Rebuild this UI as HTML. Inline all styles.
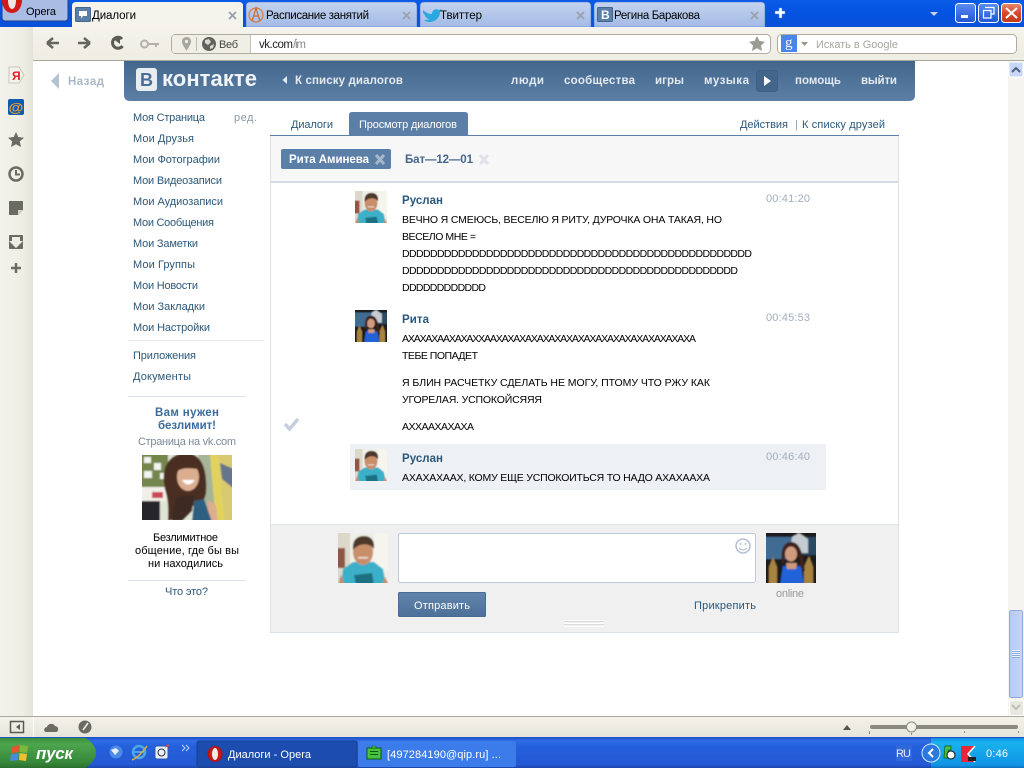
<!DOCTYPE html>
<html lang="ru"><head><meta charset="utf-8"><title>Диалоги</title>
<style>
html,body{margin:0;padding:0;width:1024px;height:768px;overflow:hidden;background:#fff}
svg{display:block}
text{font-family:"Liberation Sans","DejaVu Sans",sans-serif;font-size:11px;white-space:pre}
.m{fill:#2b587a}
.b{font-weight:bold;font-size:11.5px}
.k{fill:#000;font-size:10.5px}
.n{fill:#fff;font-weight:bold;font-size:11.5px}
.t{fill:#000;font-size:11.5px}
.g{fill:#a0aebd}
</style></head><body>
<svg width="1024" height="768" viewBox="0 0 1024 768" xmlns="http://www.w3.org/2000/svg">
<defs>
<filter id="soft" x="-5%" y="-5%" width="110%" height="110%"><feGaussianBlur stdDeviation=".7"/></filter>
<linearGradient id="title" x1="0" y1="0" x2="0" y2="1"><stop offset="0" stop-color="#0a5be8"/><stop offset=".5" stop-color="#0453e0"/><stop offset="1" stop-color="#0a50d8"/></linearGradient>
<linearGradient id="tab" x1="0" y1="0" x2="0" y2="1"><stop offset="0" stop-color="#c4d4ef"/><stop offset="1" stop-color="#a3bae6"/></linearGradient>
<linearGradient id="tool" x1="0" y1="0" x2="0" y2="1"><stop offset="0" stop-color="#f4f3ec"/><stop offset="1" stop-color="#eeede3"/></linearGradient>
<linearGradient id="side" x1="0" y1="0" x2="1" y2="0"><stop offset="0" stop-color="#f3f2ea"/><stop offset=".7" stop-color="#efeee4"/><stop offset="1" stop-color="#e4e3d8"/></linearGradient>
<linearGradient id="stat" x1="0" y1="0" x2="0" y2="1"><stop offset="0" stop-color="#f3f2ea"/><stop offset="1" stop-color="#e6e5da"/></linearGradient>
<linearGradient id="vk" x1="0" y1="0" x2="0" y2="1"><stop offset="0" stop-color="#43668b"/><stop offset="1" stop-color="#5c7fa6"/></linearGradient>
<linearGradient id="btn" x1="0" y1="0" x2="0" y2="1"><stop offset="0" stop-color="#6285ac"/><stop offset="1" stop-color="#4d7098"/></linearGradient>
<linearGradient id="task" x1="0" y1="0" x2="0" y2="1"><stop offset="0" stop-color="#1c4fc4"/><stop offset=".12" stop-color="#2f6de6"/><stop offset=".3" stop-color="#2560dc"/><stop offset=".9" stop-color="#2459d4"/><stop offset="1" stop-color="#1a44a8"/></linearGradient>
<linearGradient id="start" x1="0" y1="0" x2="0" y2="1"><stop offset="0" stop-color="#3c8f3c"/><stop offset=".2" stop-color="#4da54d"/><stop offset=".8" stop-color="#37893a"/><stop offset="1" stop-color="#2a6f2c"/></linearGradient>
<linearGradient id="tray" x1="0" y1="0" x2="0" y2="1"><stop offset="0" stop-color="#0f8ee0"/><stop offset=".15" stop-color="#19b2ee"/><stop offset=".9" stop-color="#1094e4"/><stop offset="1" stop-color="#0b6fc0"/></linearGradient>
<linearGradient id="thumb" x1="0" y1="0" x2="1" y2="0"><stop offset="0" stop-color="#b6c9f5"/><stop offset="1" stop-color="#c6d5f7"/></linearGradient>
<linearGradient id="close" x1="0" y1="0" x2="0" y2="1"><stop offset="0" stop-color="#e88a6c"/><stop offset=".5" stop-color="#d9482a"/><stop offset="1" stop-color="#c2371c"/></linearGradient>
<linearGradient id="wb" x1="0" y1="0" x2="0" y2="1"><stop offset="0" stop-color="#5c8df0"/><stop offset="1" stop-color="#1f55d8"/></linearGradient>
<radialGradient id="ore"><stop offset="0" stop-color="#f03030"/><stop offset="1" stop-color="#b01010"/></radialGradient>

<symbol id="rus" viewBox="0 0 50 50">
<g filter="url(#soft)">
<rect x="-2" y="-2" width="54" height="54" fill="#eef0e8"/>
<rect x="-2" y="-2" width="14" height="54" fill="#dcd8ca"/>
<rect x="-2" y="15" width="9" height="20" fill="#8f5545"/>
<rect x="36" y="-2" width="16" height="40" fill="#f5f5ee"/>
<path d="M3 52 L5 36 L15 29 L36 29 L45 36 L48 52Z" fill="#3bb0c8"/>
<path d="M0 52 L3 42 L7 52Z M44 52 L47 44 L51 52Z" fill="#c98a68"/>
<path d="M16 42 L34 40 L36 52 L18 52Z" fill="#1f6f82"/>
<ellipse cx="25" cy="19" rx="10" ry="13" fill="#c98d6b"/>
<path d="M15 17 C14 6 20 3 26 3 C34 3 37 9 36 16 C32 10 22 9 15 17Z" fill="#4e382c"/>
<rect x="20" y="24" width="10" height="1.500" fill="#f0e2d6"/>
</g>
</symbol>

<symbol id="rit" viewBox="0 0 50 50">
<g filter="url(#soft)">
<rect x="-2" y="-2" width="54" height="54" fill="#1b1c1a"/>
<rect x="-2" y="4" width="30" height="22" fill="#3f6c94"/>
<rect x="36" y="4" width="16" height="18" fill="#2c4a64"/>
<path d="M24 20 L26 4 L33 0 L42 6 L42 20Z" fill="#c4ccd2"/>
<path d="M3 52 V34 L7 24 L11 34 V52Z M38 52 V34 L43 23 L47 34 V52Z" fill="#a98440"/>
<path d="M14 52 L17 33 H35 L38 52Z" fill="#2062d8"/>
<path d="M16 30 C14 12 20 9 26 9 C34 10 37 20 39 38 C35 38 33 32 33 24 L19 24 C18 30 18 32 16 30Z" fill="#3c241a"/>
<ellipse cx="25" cy="21" rx="6" ry="7.500" fill="#d09c80"/>
<path d="M20 30 H31 L30 36 H21Z" fill="#cf9a7c"/>
</g>
</symbol>

<symbol id="ad" viewBox="0 0 90 65">
<g filter="url(#soft)">
<rect x="-2" y="-2" width="94" height="70" fill="#dfe4d4"/>
<rect x="-2" y="-2" width="28" height="34" fill="#74864e"/>
<g fill="#f2f4ee"><rect x="2" y="2" width="7" height="6"/><rect x="12" y="8" width="7" height="7"/><rect x="2" y="16" width="8" height="7"/><rect x="18" y="18" width="6" height="6"/></g>
<rect x="-2" y="32" width="26" height="14" fill="#f2eee8"/>
<rect x="10" y="37" width="11" height="6" fill="#c84a55"/>
<rect x="-2" y="46" width="20" height="21" fill="#26252a"/>
<path d="M56 -2 L68 -2 L74 67 L60 67Z" fill="#a6b498"/>
<path d="M68 -2 L76 -2 L82 67 L74 67Z" fill="#e2d25c"/>
<path d="M76 -2 L92 -2 L92 67 L82 67Z" fill="#d9c96e"/>
<path d="M78 8 L92 14 L92 34 L80 24Z" fill="#66748e"/>
<path d="M66 45 L74 50 L76 67 H66Z" fill="#dcae90"/>
<path d="M24 38 C16 10 30 -2 44 -2 C58 -2 66 12 64 38 C62 50 56 46 52 50 L40 62 L26 66 C26 58 27 48 24 38Z" fill="#4c2f22"/>
<ellipse cx="46" cy="22" rx="11" ry="14" fill="#dcae90"/>
<path d="M34 17 C36 5 48 3 58 14 C50 14 42 11 34 17Z" fill="#4c2f22"/>
<path d="M40 25 Q46 34 53 25Z" fill="#fff"/>
<path d="M50 67 L52 46 L62 44 L70 67Z" fill="#2f5f80"/>
<path d="M34 42 L52 40 L50 56 L40 66 L30 66Z" fill="#3d2a24"/>
</g>
</symbol>
</defs>

<!-- window title -->
<rect x="0" y="0" width="1024" height="27" fill="url(#title)"/>
<rect x="2" y="-3" width="66" height="24" rx="3" fill="#a9bde4" stroke="#23408c"/>
<path d="M2 0 H22 C22 7 18 13 12 13 C6 13 2 7 2 0Z" fill="#d21a1a"/>
<path d="M8 0 H16 C16 4 15 9 12 9 C9 9 8 4 8 0Z" fill="#efe8e0"/>
<text x="26" y="15" fill="#000" textLength="30" lengthAdjust="spacing">Opera</text>

<path d="M72 27 V6 Q72 2 76 2 H239 Q243 2 243 6 V27Z" fill="#f4f3ec"/>
<g fill="url(#tab)" stroke="#3a6cc8" stroke-width=".5">
<path d="M246 27 V6 Q246 2 250 2 H413 Q417 2 417 6 V27Z"/>
<path d="M420 27 V6 Q420 2 424 2 H587 Q591 2 591 6 V27Z"/>
<path d="M594 27 V6 Q594 2 598 2 H761 Q765 2 765 6 V27Z"/>
</g>
<rect x="75.500" y="7.500" width="15" height="14" rx="1" fill="#5b7fa6" stroke="#44668c"/>
<path d="M79 11 H87 V16 H83 L81 18.500 V16 H79Z" fill="#fff"/>
<text x="92" y="19" class="t" textLength="44" lengthAdjust="spacing">Диалоги</text>
<circle cx="256" cy="15" r="7" fill="none" stroke="#d97a3a" stroke-width="1.200"/>
<path d="M252 21 L256 8 L260 21 M253 16 H259" fill="none" stroke="#c96a2a" stroke-width="1.200"/>
<text x="266" y="19" class="t" textLength="103" lengthAdjust="spacing">Расписание занятий</text>
<path d="M423 10 C426 13 429 14 432 14 C432 10 436 8 439 10 L442 9 L440 12 C440 18 435 22 429 22 C427 22 425 21 424 20 C426 20 428 20 429 19 C426 18 425 16 425 15 C423 14 423 12 423 10Z" fill="#29a9e0"/>
<text x="440" y="19" class="t" textLength="42" lengthAdjust="spacing">Твиттер</text>
<rect x="597.500" y="7.500" width="15" height="14" rx="1" fill="#5b7fa6" stroke="#44668c"/>
<text x="601" y="19" class="n" style="font-size:12px">В</text>
<text x="614" y="19" class="t" textLength="86" lengthAdjust="spacing">Регина Баракова</text>
<g stroke="#9aa0ac" stroke-width="1.800">
<path d="M229 12 L236 19 M236 12 L229 19"/>
<path d="M403 12 L410 19 M410 12 L403 19"/>
<path d="M577 12 L584 19 M584 12 L577 19"/>
<path d="M751 12 L758 19 M758 12 L751 19"/>
</g>
<path d="M776 11 H780 V8 H783 V11 H786 V14 H783 V18 H780 V14 H776Z" transform="translate(-1 0)" fill="#fff" stroke="#5a80d0" stroke-width=".5"/>
<path d="M930 12 H938 L934 16Z" fill="#c5d4ef"/>
<rect x="955.500" y="3.500" width="20" height="19" rx="3" fill="url(#wb)" stroke="#fff"/>
<rect x="961" y="15" width="7" height="3" fill="#fff"/>
<rect x="978.500" y="3.500" width="20" height="19" rx="3" fill="url(#wb)" stroke="#fff"/>
<path d="M985 7.500 H994 V14 H991 M983.500 10.500 H991 V18 H983.500Z" fill="none" stroke="#fff" stroke-width="1.200"/>
<rect x="1001.500" y="3.500" width="20" height="19" rx="3" fill="url(#close)" stroke="#fff"/>
<path d="M1006 8 L1017 18 M1017 8 L1006 18" stroke="#fff" stroke-width="2"/>

<!-- toolbar -->
<rect x="0" y="27" width="1024" height="34" fill="url(#tool)"/>
<rect x="0" y="27" width="33" height="690" fill="url(#side)"/>
<rect x="33" y="60" width="991" height="1" fill="#a9a89c"/>
<path d="M47 43 H59 M47 43 L53 38 M47 43 L53 48" fill="none" stroke="#66665e" stroke-width="2.500"/>
<path d="M78 43 H90 M90 43 L84 38 M90 43 L84 48" fill="none" stroke="#66665e" stroke-width="2.500"/>
<path d="M122 39 A5.500 5.500 0 1 0 122.500 46" fill="none" stroke="#5c5c55" stroke-width="3"/>
<path d="M112 37 H120 V43Z" fill="#5c5c55" transform="translate(0 1)"/>
<circle cx="144.500" cy="44" r="3.500" fill="none" stroke="#b3b2a8" stroke-width="2"/>
<path d="M148 43 H159 V45 H157 V47 H155 V45 H148Z" fill="#b3b2a8"/>
<rect x="171.500" y="34.500" width="599" height="19" rx="4" fill="#fff" stroke="#aeac9e"/>
<path d="M172 38 Q172 35 175 35 H250 V53 H175 Q172 53 172 50Z" fill="#f0efe6"/>
<rect x="250" y="35" width="1" height="18" fill="#c5c4b8"/>
<path d="M186.500 37 C183.500 37 182 39 182 41.500 C182 44.500 185 48 186.500 51 C188 48 191 44.500 191 41.500 C191 39 189.500 37 186.500 37Z" fill="#a8a8a0"/><circle cx="186.500" cy="41.500" r="1.600" fill="#f0efe6"/>
<rect x="196" y="37" width="1" height="14" fill="#bdbcb0"/>
<circle cx="209" cy="44" r="7" fill="#62625c"/>
<path d="M205 40 L209 39 L211 42 L208 45 L205 43Z M210 46 L214 44 L213 48 L210 49Z" fill="#d9d8ce"/>
<text x="219" y="48" fill="#444" textLength="19" lengthAdjust="spacing">Веб</text>
<text x="259" y="48" style="font-size:11.5px" fill="#222" textLength="34" lengthAdjust="spacing">vk.com</text>
<text x="293" y="48" style="font-size:11.5px" fill="#8a8a8a" textLength="13" lengthAdjust="spacing">/im</text>
<path d="M757 36 L759.500 41 L765 41.700 L761 45.500 L762 51 L757 48.300 L752 51 L753 45.500 L749 41.700 L754.500 41Z" fill="#9b9b92"/>
<rect x="777.500" y="34.500" width="239" height="19" rx="4" fill="#fff" stroke="#aeac9e"/>
<rect x="781" y="35" width="16" height="17" fill="#4a85e8"/>
<text x="785" y="47" style="font-size:15px;font-family:'Liberation Serif',serif" fill="#fff">g</text>
<path d="M801 42 H808 L804.500 46Z" fill="#98988e"/>
<text x="816" y="48" fill="#a8a89e" textLength="82" lengthAdjust="spacing">Искать в Google</text>

<!-- left panel -->
<path d="M9 67 H19 L24 75 L19 83 H9Z" fill="#f4f2ec" stroke="#c8c6bc"/>
<text x="12" y="80" style="font-size:12px;font-weight:bold" fill="#e2202a">Я</text>
<rect x="8" y="99" width="16" height="16" rx="2" fill="#0e5cb0"/>
<text x="8.500" y="112" style="font-size:13px;font-weight:bold" fill="#f0a030" textLength="15" lengthAdjust="spacingAndGlyphs">@</text>
<path d="M16 132 L18.300 137 L24 137.700 L19.800 141.400 L21 147 L16 144.200 L11 147 L12.200 141.400 L8 137.700 L13.700 137Z" fill="#6b6b65"/>
<circle cx="16" cy="174" r="6.500" fill="none" stroke="#6b6b65" stroke-width="2.500"/><path d="M16 170 V174.500 H20" fill="none" stroke="#6b6b65" stroke-width="2"/>
<path d="M9 201 H23 V210 L18 215 H9Z" fill="#6b6b65"/><path d="M18 215 V210 H23Z" fill="#d4d3c8"/>
<rect x="9" y="235" width="14" height="14" rx="1" fill="#6b6b65"/><path d="M12 237 H20 V241 H23 L16 248 L9 241 H12Z" fill="#efeee4"/>
<path d="M11 268 H21 M16 263 V273" stroke="#6b6b65" stroke-width="2.500"/>

<!-- page -->
<rect x="33" y="61" width="975" height="655" fill="#fff"/>
<path d="M59 73 V89 L51 81Z" fill="#b4c2d2"/>
<text x="68" y="85" class="b" fill="#a9b8c9" textLength="36" lengthAdjust="spacing">Назад</text>

<path d="M124 61 H915 V95 Q915 101 909 101 H130 Q124 101 124 95Z" fill="url(#vk)"/>
<rect x="136" y="68" width="21" height="23" rx="3" fill="#e8edf2"/>
<text x="140" y="86" style="font-size:18px;font-weight:bold" fill="#4a6d95">В</text>
<text x="162" y="86" style="font-size:22px;font-weight:bold" fill="#f0f3f7" textLength="95" lengthAdjust="spacing">контакте</text>
<path d="M287 76 V84 L282.500 80Z" fill="#e4eaf1"/>
<text x="295" y="84" class="n" fill-opacity=".85" textLength="108" lengthAdjust="spacing">К списку диалогов</text>
<text x="511" y="84" class="n" fill-opacity=".85" textLength="33" lengthAdjust="spacing">люди</text>
<text x="564" y="84" class="n" fill-opacity=".85" textLength="71" lengthAdjust="spacing">сообщества</text>
<text x="655" y="84" class="n" fill-opacity=".85" textLength="29" lengthAdjust="spacing">игры</text>
<text x="704" y="84" class="n" fill-opacity=".85" textLength="45" lengthAdjust="spacing">музыка</text>
<text x="795" y="84" class="n" fill-opacity=".85" textLength="46" lengthAdjust="spacing">помощь</text>
<text x="861" y="84" class="n" fill-opacity=".85" textLength="36" lengthAdjust="spacing">выйти</text>
<rect x="756.500" y="70.500" width="21" height="21" rx="3" fill="#44658a" stroke="#3f5f84"/>
<path d="M764 76 L771 81 L764 86Z" fill="#fff"/>

<!-- menu -->
<text x="133" y="121" class="m" textLength="72" lengthAdjust="spacing">Моя Страница</text>
<text x="133" y="142" class="m" textLength="61" lengthAdjust="spacing">Мои Друзья</text>
<text x="133" y="163" class="m" textLength="87" lengthAdjust="spacing">Мои Фотографии</text>
<text x="133" y="184" class="m" textLength="89" lengthAdjust="spacing">Мои Видеозаписи</text>
<text x="133" y="205" class="m" textLength="90" lengthAdjust="spacing">Мои Аудиозаписи</text>
<text x="133" y="226" class="m" textLength="81" lengthAdjust="spacing">Мои Сообщения</text>
<text x="133" y="247" class="m" textLength="65" lengthAdjust="spacing">Мои Заметки</text>
<text x="133" y="268" class="m" textLength="62" lengthAdjust="spacing">Мои Группы</text>
<text x="133" y="289" class="m" textLength="65" lengthAdjust="spacing">Мои Новости</text>
<text x="133" y="310" class="m" textLength="72" lengthAdjust="spacing">Мои Закладки</text>
<text x="133" y="331" class="m" textLength="77" lengthAdjust="spacing">Мои Настройки</text>
<text x="133" y="359" class="m" textLength="63" lengthAdjust="spacing">Приложения</text>
<text x="133" y="380" class="m" textLength="58" lengthAdjust="spacing">Документы</text>
<text x="234" y="121" fill="#8b98a6" textLength="23" lengthAdjust="spacing">ред.</text>
<rect x="128" y="340" width="136" height="1" fill="#e4e8ed"/>
<rect x="128" y="396" width="118" height="1" fill="#dae1e8"/>
<text x="155" y="416" class="b" fill="#3b6b9c" textLength="64" lengthAdjust="spacing">Вам нужен</text>
<text x="158" y="429" class="b" fill="#3b6b9c" textLength="58" lengthAdjust="spacing">безлимит!</text>
<text x="138" y="445" fill="#7d8a99" textLength="98" lengthAdjust="spacing">Страница на vk.com</text>
<use href="#ad" x="142" y="455" width="90" height="65"/>
<text x="153" y="541" fill="#000" textLength="65" lengthAdjust="spacing">Безлимитное</text>
<text x="135" y="554" fill="#000" textLength="104" lengthAdjust="spacing">общение, где бы вы</text>
<text x="148" y="567" fill="#000" textLength="75" lengthAdjust="spacing">ни находились</text>
<rect x="128" y="580" width="118" height="1" fill="#dae1e8"/>
<text x="165" y="595" class="m" textLength="43" lengthAdjust="spacing">Что это?</text>

<!-- main box -->
<rect x="270" y="135" width="1" height="498" fill="#dae1e8"/>
<rect x="898" y="135" width="1" height="498" fill="#dae1e8"/>
<rect x="270" y="632" width="629" height="1" fill="#dae1e8"/>
<rect x="270" y="135" width="629" height="1" fill="#5b7fa6"/>
<path d="M349 135 V115 Q349 112 352 112 H465 Q468 112 468 115 V135Z" fill="#5b7fa6"/>
<text x="291" y="128" class="m" textLength="42" lengthAdjust="spacing">Диалоги</text>
<text x="359" y="128" fill="#fff" textLength="98" lengthAdjust="spacing">Просмотр диалогов</text>
<text x="740" y="128" class="m" textLength="48" lengthAdjust="spacing">Действия</text>
<text x="795" y="128" fill="#8fa1b5">|</text>
<text x="802" y="128" class="m" textLength="83" lengthAdjust="spacing">К списку друзей</text>
<rect x="271" y="136" width="627" height="45" fill="#f7f7f7"/>
<rect x="271" y="181" width="627" height="2" fill="#d6dce4"/>
<rect x="281" y="149" width="110" height="20" rx="2" fill="#5b7fa6"/>
<text x="289" y="163" class="n" textLength="80" lengthAdjust="spacing">Рита Аминева</text>
<path d="M376 155 L384 164 M384 155 L376 164" stroke="#a8b9cc" stroke-width="3"/>
<text x="405" y="163" class="b" fill="#44668c" textLength="68" lengthAdjust="spacing">Бат—12—01</text>
<path d="M480 155 L488 164 M488 155 L480 164" stroke="#dfe3e8" stroke-width="3"/>

<!-- messages -->
<use href="#rus" x="355" y="191" width="32" height="32"/>
<text x="402" y="204" class="m b" textLength="41" lengthAdjust="spacing">Руслан</text>
<text x="766" y="202" class="g" textLength="44" lengthAdjust="spacing">00:41:20</text>
<text x="402" y="223" class="k" textLength="320" lengthAdjust="spacing">ВЕЧНО Я СМЕЮСЬ, ВЕСЕЛЮ Я РИТУ, ДУРОЧКА ОНА ТАКАЯ, НО</text>
<text x="402" y="240" class="k" textLength="74" lengthAdjust="spacing">ВЕСЕЛО МНЕ =</text>
<text x="402" y="257" class="k" textLength="350" lengthAdjust="spacing">DDDDDDDDDDDDDDDDDDDDDDDDDDDDDDDDDDDDDDDDDDDDDDDDDD</text>
<text x="402" y="274" class="k" textLength="336" lengthAdjust="spacing">DDDDDDDDDDDDDDDDDDDDDDDDDDDDDDDDDDDDDDDDDDDDDDDD</text>
<text x="402" y="291" class="k" textLength="84" lengthAdjust="spacing">DDDDDDDDDDDD</text>
<use href="#rit" x="355" y="310" width="32" height="32"/>
<text x="402" y="323" class="m b" textLength="27" lengthAdjust="spacing">Рита</text>
<text x="766" y="321" class="g" textLength="44" lengthAdjust="spacing">00:45:53</text>
<text x="402" y="342" class="k" textLength="294" lengthAdjust="spacing">АХАХАХААХАХАХХААХАХАХАХАХАХАХАХАХАХАХАХАХАХАХАХАХА</text>
<text x="402" y="359" class="k" textLength="76" lengthAdjust="spacing">ТЕБЕ ПОПАДЕТ</text>
<text x="402" y="386" class="k" textLength="308" lengthAdjust="spacing">Я БЛИН РАСЧЕТКУ СДЕЛАТЬ НЕ МОГУ, ПТОМУ ЧТО РЖУ КАК</text>
<text x="402" y="403" class="k" textLength="140" lengthAdjust="spacing">УГОРЕЛАЯ. УСПОКОЙСЯЯЯ</text>
<text x="402" y="430" class="k" textLength="72" lengthAdjust="spacing">АХХААХАХАХА</text>
<path d="M285 424 L289.500 429 L298 419" fill="none" stroke="#c4d0de" stroke-width="3.500"/>
<rect x="350" y="444" width="476" height="46" fill="#edf0f5"/>
<use href="#rus" x="355" y="449" width="32" height="32"/>
<text x="402" y="462" class="m b" textLength="41" lengthAdjust="spacing">Руслан</text>
<text x="766" y="460" class="g" textLength="44" lengthAdjust="spacing">00:46:40</text>
<text x="402" y="481" class="k" textLength="308" lengthAdjust="spacing">АХАХАХААХ, КОМУ ЕЩЕ УСПОКОИТЬСЯ ТО НАДО АХАХААХА</text>

<!-- composer -->
<rect x="271" y="524" width="627" height="108" fill="#f0f0f0"/>
<rect x="271" y="524" width="627" height="1" fill="#dfe3ea"/>
<use href="#rus" x="338" y="533" width="50" height="50"/>
<rect x="398.500" y="533.500" width="357" height="49" rx="2" fill="#fff" stroke="#c0cad8"/>
<circle cx="743" cy="546" r="7" fill="none" stroke="#b4c0d2" stroke-width="1.500"/>
<circle cx="740.500" cy="544" r="1" fill="#b4c0d2"/><circle cx="745.500" cy="544" r="1" fill="#b4c0d2"/>
<path d="M739 548 Q743 552 747 548" fill="none" stroke="#b4c0d2" stroke-width="1.200"/>
<use href="#rit" x="766" y="533" width="50" height="50"/>
<text x="776" y="597" fill="#999" textLength="28" lengthAdjust="spacing">online</text>
<rect x="398.500" y="592.500" width="87" height="24" rx="1" fill="url(#btn)" stroke="#4a6c92"/>
<text x="414" y="609" fill="#fff" textLength="56" lengthAdjust="spacing">Отправить</text>
<text x="694" y="609" class="m" textLength="62" lengthAdjust="spacing">Прикрепить</text>
<g fill="#fff"><rect x="564" y="620" width="40" height="1"/><rect x="564" y="623" width="40" height="1"/><rect x="564" y="626" width="40" height="1"/></g>
<g fill="#dadce0"><rect x="564" y="621" width="40" height="1"/><rect x="564" y="624" width="40" height="1"/></g>

<!-- scrollbar -->
<rect x="1008" y="61" width="16" height="655" fill="#f5f4ee"/>
<rect x="1009" y="62" width="14" height="15" rx="2" fill="#c8d6f7" stroke="#fff"/>
<path d="M1012 72 L1016 68 L1020 72" fill="none" stroke="#4d6185" stroke-width="2"/>
<rect x="1009.500" y="610.500" width="13" height="87" rx="2" fill="url(#thumb)" stroke="#8fa8e0"/>
<g fill="#eef2fd"><rect x="1012" y="650" width="8" height="1"/><rect x="1012" y="652" width="8" height="1"/><rect x="1012" y="654" width="8" height="1"/><rect x="1012" y="656" width="8" height="1"/></g>
<g fill="#8ea8e4"><rect x="1012" y="651" width="8" height="1"/><rect x="1012" y="653" width="8" height="1"/><rect x="1012" y="655" width="8" height="1"/><rect x="1012" y="657" width="8" height="1"/></g>
<rect x="1009.500" y="700.500" width="14" height="15" rx="2" fill="#e9e8e0" stroke="#fff"/>
<path d="M1012 705 L1016 709 L1020 705" fill="none" stroke="#c0bfb4" stroke-width="2"/>

<!-- status bar -->
<rect x="0" y="716" width="1024" height="1" fill="#a9a89c"/>
<rect x="0" y="717" width="1024" height="21" fill="url(#stat)"/>
<rect x="33" y="717" width="1" height="21" fill="#fbfbf7"/>
<rect x="10.500" y="721.500" width="13" height="11" fill="none" stroke="#5a5a54" stroke-width="1.500"/>
<path d="M20 724 V730 L16 727Z" fill="#5a5a54"/>
<path d="M46 732 C43 732 44 727 47 727 C48 723 54 723 55 726 C59 726 59 732 56 732Z" fill="#6b6b64"/>
<circle cx="85" cy="727" r="6.500" fill="#6b6b64"/>
<path d="M83 730 L88 723" stroke="#eeede3" stroke-width="1.600"/>
<path d="M843 730 L847 725 L851 730Z" fill="#55554e"/>
<rect x="870" y="725" width="148" height="4" rx="2" fill="#8b8a80"/>
<circle cx="911.500" cy="727" r="5" fill="#f2f1ea" stroke="#8b8a80"/>
<g fill="#8b8a80"><rect x="869" y="731" width="1" height="3"/><rect x="911" y="733" width="1" height="2"/><rect x="964" y="731" width="1" height="2"/><rect x="1018" y="731" width="1" height="2"/></g>

<!-- taskbar -->
<rect x="0" y="737" width="1024" height="31" fill="url(#task)"/>
<path d="M0 738 H86 Q96 745 96 753 Q96 760 86 768 H0Z" fill="url(#start)"/>
<g><path d="M12 747 L19 745 L18.500 752 L11 753.500Z" fill="#e8552a"/><path d="M20 745 L28 746 L27 753 L19.500 752Z" fill="#7eb83a"/><path d="M11 754.500 L18.500 753 L18 760 L10 761Z" fill="#4c8ae0"/><path d="M19.500 753 L27 754 L26 761 L19 760Z" fill="#f0c030"/></g>
<text x="36" y="759" style="font-size:17px;font-weight:bold;font-style:italic" fill="#fff" textLength="37" lengthAdjust="spacing">пуск</text>
<circle cx="116" cy="752" r="6.500" fill="#4c8ce8"/><path d="M111 750 L116 748 L119 751 L115 755Z" fill="#e8f0fc"/>
<circle cx="139" cy="752" r="6" fill="none" stroke="#4aa8e8" stroke-width="2.500"/>
<path d="M133 752 H145" stroke="#4aa8e8" stroke-width="2"/>
<path d="M132 760 C137 758 143 752 147 746" fill="none" stroke="#e8b030" stroke-width="1.500"/>
<rect x="155" y="746" width="13" height="13" rx="2" fill="#e8f0fc" stroke="#2b5aa8"/>
<circle cx="161.500" cy="752.500" r="3.500" fill="none" stroke="#333"/>
<path d="M165 747 L169 745" stroke="#e8552a" stroke-width="1.500"/>
<path d="M182 745 L185 748 L182 751 M186 745 L189 748 L186 751" fill="none" stroke="#c8d8f8" stroke-width="1"/>
<rect x="197" y="741" width="160" height="26" rx="2" fill="#1c4cae" stroke="#17408f"/>
<ellipse cx="215" cy="754" rx="7.500" ry="8" fill="url(#ore)"/><ellipse cx="215" cy="754" rx="3" ry="6" fill="#f2ece8"/>
<text x="228" y="758" fill="#fff" textLength="83" lengthAdjust="spacing">Диалоги - Opera</text>
<rect x="358" y="741" width="158" height="26" rx="2" fill="#3c7bea"/>
<rect x="367" y="748" width="14" height="11" fill="#48c040" stroke="#0a5a10"/>
<rect x="372" y="746" width="4" height="2" fill="#48c040" stroke="#0a5a10" stroke-width=".5"/>
<g fill="#0a5a10"><rect x="370" y="751" width="8" height="1"/><rect x="370" y="754" width="8" height="1"/></g>
<text x="387" y="758" fill="#fff" textLength="114" lengthAdjust="spacing">[497284190@qip.ru] ...</text>
<rect x="896" y="745" width="16" height="16" fill="#2f68d8"/>
<text x="896" y="757" fill="#e8f0fc" textLength="15" lengthAdjust="spacing">RU</text>
<rect x="931" y="738" width="93" height="30" fill="url(#tray)"/>
<circle cx="931" cy="753" r="9" fill="#2a78e0" stroke="#d8e8fc"/>
<path d="M933 749 L929 753 L933 757" fill="none" stroke="#fff" stroke-width="2"/>
<path d="M945 746 H951 V750 H948 V758 H944Z" fill="#4ec23e" stroke="#0a5a10" stroke-width=".7"/>
<circle cx="951" cy="755" r="4" fill="#fff" stroke="#111"/>
<path d="M961 746 H975 L968 754 L975 762 H961Z" fill="#e8283a"/>
<path d="M975 746 L968 754 L975 762" fill="none" stroke="#fff" stroke-width="1.500"/>
<rect x="968" y="757" width="8" height="4" fill="#222"/>
<text x="986" y="757" fill="#fff" textLength="22" lengthAdjust="spacing">0:46</text>
</svg>
</body></html>
